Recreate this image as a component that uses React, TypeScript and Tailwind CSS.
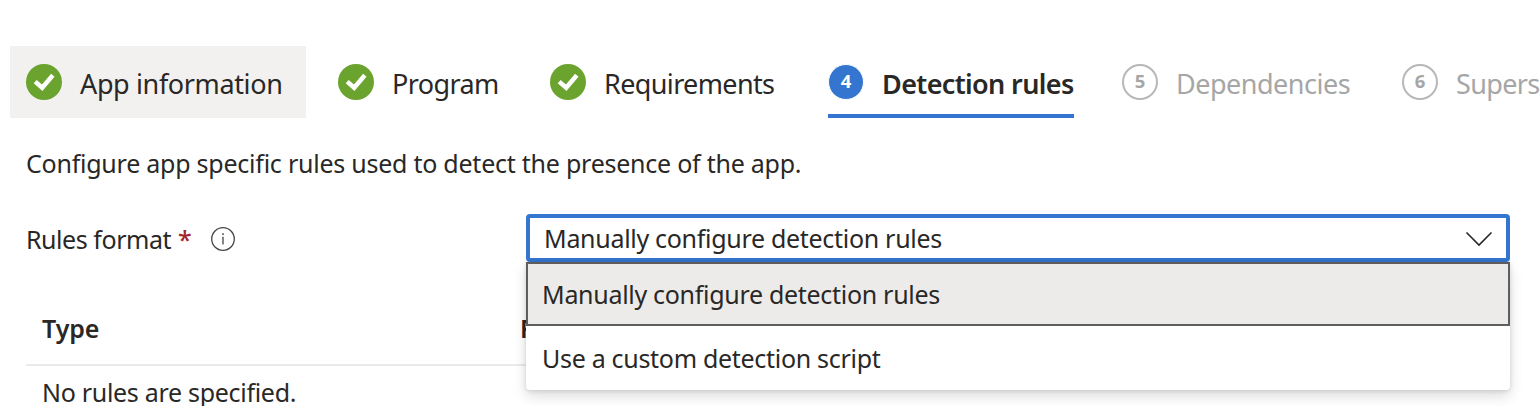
import React from 'react';
import clsx from 'clsx';

function CheckBadge() {
  return (
    <svg className="h-9 w-9 shrink-0" viewBox="0 0 36 36" fill="none">
      <circle cx="18" cy="18" r="18" fill="#6ba32f" />
      <path d="M9.2 17.6L16.2 23.8L26.8 11.2" stroke="#fff" strokeWidth="4.5" />
    </svg>
  );
}

function NumberBadge({ value, active }: { value: number; active?: boolean }) {
  return (
    <span
      className={clsx(
        'flex h-9 w-9 shrink-0 items-center justify-center rounded-full pb-px text-[18.5px] leading-none font-bold tracking-normal',
        active ? 'border border-white bg-[#3375cf] text-white' : 'border-2 border-[#b8b8b8] text-[#a6a6a6]',
      )}
    >
      {value}
    </span>
  );
}

type Step = { label: string; state: 'done' | 'active' | 'todo'; box: string; text: string };

const steps: Step[] = [
  { label: 'App information', state: 'done', box: 'w-[296px] bg-[#f3f1f0]', text: 'ml-[18px] tracking-[-0.37px]' },
  { label: 'Program', state: 'done', box: 'w-[196px]', text: 'ml-[18px] tracking-[-0.6px]' },
  { label: 'Requirements', state: 'done', box: 'w-[262px]', text: 'ml-[18px] tracking-[-0.63px]' },
  { label: 'Detection rules', state: 'active', box: 'w-[278px]', text: 'ml-[18px] tracking-[-0.63px] font-semibold' },
  { label: 'Dependencies', state: 'todo', box: 'w-[264px]', text: 'ml-[18px] tracking-[-0.5px]' },
  { label: 'Supersedence', state: 'todo', box: 'w-[264px]', text: 'ml-[18px] tracking-[-0.65px]' },
];

function StepTab({ step, index }: { step: Step; index: number }) {
  return (
    <div className={clsx('flex h-[72px] shrink-0 flex-col px-4', step.box)}>
      <div className="flex h-[68px] items-start pt-[17.5px]">
        {step.state === 'done' ? <CheckBadge /> : <NumberBadge value={index + 1} active={step.state === 'active'} />}
        <span
          className={clsx(
            'mt-0.5 text-[27px] leading-9 whitespace-nowrap',
            step.state === 'todo' && 'text-[#a6a6a6]',
            step.text,
          )}
        >
          {step.label}
        </span>
      </div>
      {step.state === 'active' && <div className="h-1 bg-[#3375cf]" />}
    </div>
  );
}

export default function App() {
  return (
    <div className="h-[406px] w-full overflow-hidden bg-white pt-[46px] font-['Noto_Sans','Open_Sans',sans-serif] text-[25px] leading-8 tracking-[-0.3px] text-[#292827]">
      <div className="flex gap-4 pl-2.5">
        {steps.map((step, i) => (
          <StepTab key={step.label} step={step} index={i} />
        ))}
      </div>

      <p className="mt-[29px] pl-[26px] tracking-[-0.24px] whitespace-nowrap">
        Configure app specific rules used to detect the presence of the app.
      </p>

      <div className="mt-[35px] flex h-12 pl-[26px]">
        <div className="flex w-[500px] items-center pt-0.5">
          <span className="tracking-[-0.45px]">Rules format</span>
          <span className="ml-[7px] font-medium text-[#a4262c]">*</span>
          <svg className="ml-[18.5px] h-[26px] w-[26px]" viewBox="0 0 26 26" fill="none" stroke="#484644">
            <circle cx="13" cy="13" r="11.3" strokeWidth="1.3" />
            <path d="M13 10.8V18.5" strokeWidth="1.3" />
            <path d="M13 7.2V9" strokeWidth="1.5" />
          </svg>
        </div>

        <div className="relative w-[984px]">
          <div className="flex h-12 items-center justify-between rounded-[4px] border-4 border-[#3375cf] bg-white pr-[13px] pl-3.5">
            <span>Manually configure detection rules</span>
            <svg className="mt-0.5 h-4 w-7" viewBox="0 0 28 16" fill="none" stroke="#292827" strokeWidth="1.6">
              <path d="M1.5 1.5L14 14L26.5 1.5" />
            </svg>
          </div>
          <div className="absolute top-12 left-0 z-10 w-full rounded-b-[4px] bg-white shadow-[0_6px_14px_rgba(0,0,0,0.14),0_1px_4px_rgba(0,0,0,0.12)]">
            <div className="flex h-16 items-center border-2 border-[#605e5c] bg-[#ecebe9] pl-3.5">
              Manually configure detection rules
            </div>
            <div className="flex h-16 items-center pl-4">Use a custom detection script</div>
          </div>
        </div>
      </div>

      <div className="mt-[34px] ml-[26px] w-[1484px]">
        <div className="flex h-[70px] items-center border-b-2 border-[#eaeaea] pb-1 pl-4 font-semibold">
          <span className="w-[478px] tracking-[-0.1px]">Type</span>
          <span className="w-1.5 overflow-hidden whitespace-nowrap">Path/Code</span>
        </div>
        <div className="pt-2.5 pl-4">No rules are specified.</div>
      </div>
    </div>
  );
}
